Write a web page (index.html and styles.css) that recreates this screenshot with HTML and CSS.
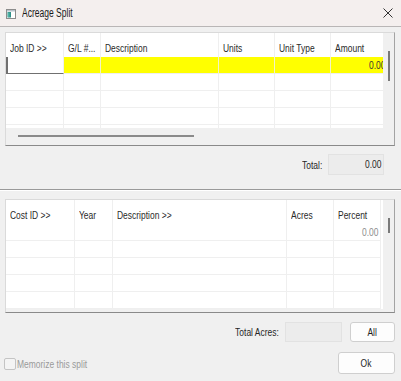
FILE: index.html
```html
<!DOCTYPE html>
<html>
<head>
<meta charset="utf-8">
<link rel="stylesheet" href="styles.css">
</head>
<body>
<div class="window">
  <div class="titlebar">
    <svg class="app-icon" width="10" height="10" viewBox="0 0 10 10">
      <rect x="0.5" y="0.5" width="9" height="9" fill="#fff" stroke="#8c8c8c"/>
      <rect x="1" y="1" width="8" height="1.5" fill="#b8c4cc"/>
      <rect x="1.5" y="3" width="3.5" height="5.5" fill="#2f8f86"/>
      <rect x="2" y="3.5" width="1.5" height="4.5" fill="#4fb3a6"/>
    </svg>
    <span class="title t">Acreage Split</span>
    <svg class="close" width="10" height="10" viewBox="0 0 10 10">
      <path d="M0.5 0.5 L9.5 9.5 M9.5 0.5 L0.5 9.5" stroke="#333" stroke-width="1"/>
    </svg>
  </div>

  <div class="content">
    <div class="panel upper">
      <div class="panel-main">
        <div class="grid-area">
          <div class="grid grid-jobs">
            <div class="cell head"><span class="t">Job ID &gt;&gt;</span></div>
            <div class="cell head"><span class="t">G/L #...</span></div>
            <div class="cell head"><span class="t">Description</span></div>
            <div class="cell head"><span class="t">Units</span></div>
            <div class="cell head"><span class="t">Unit Type</span></div>
            <div class="cell head"><span class="t">Amount</span></div>

            <div class="cell yellow editing"></div>
            <div class="cell yellow"></div>
            <div class="cell yellow"></div>
            <div class="cell yellow"></div>
            <div class="cell yellow"></div>
            <div class="cell yellow num amount"><span class="tr">0.00</span></div>

            <div class="cell"></div><div class="cell"></div><div class="cell"></div><div class="cell"></div><div class="cell"></div><div class="cell"></div>
            <div class="cell"></div><div class="cell"></div><div class="cell"></div><div class="cell"></div><div class="cell"></div><div class="cell"></div>
            <div class="cell"></div><div class="cell"></div><div class="cell"></div><div class="cell"></div><div class="cell"></div><div class="cell"></div>
            <div class="cell"></div><div class="cell"></div><div class="cell"></div><div class="cell"></div><div class="cell"></div><div class="cell"></div>
          </div>
        </div>
        <div class="vscroll"><div class="vthumb upper-thumb"></div></div>
      </div>
      <div class="hscroll"><div class="hthumb"></div></div>
    </div>

    <div class="total-row">
      <span class="label tr">Total:</span>
      <div class="field total-field"><span class="tr">0.00</span></div>
    </div>

    <div class="separator"></div>

    <div class="panel lower">
      <div class="panel-main lower-main">
        <div class="grid-area lower-area">
          <div class="grid grid-costs">
            <div class="cell head"><span class="t">Cost ID &gt;&gt;</span></div>
            <div class="cell head"><span class="t">Year</span></div>
            <div class="cell head"><span class="t">Description &gt;&gt;</span></div>
            <div class="cell head"><span class="t">Acres</span></div>
            <div class="cell head"><span class="t">Percent</span></div>

            <div class="cell"></div><div class="cell"></div><div class="cell"></div><div class="cell"></div><div class="cell num muted"><span class="tr">0.00</span></div>
            <div class="cell"></div><div class="cell"></div><div class="cell"></div><div class="cell"></div><div class="cell"></div>
            <div class="cell"></div><div class="cell"></div><div class="cell"></div><div class="cell"></div><div class="cell"></div>
            <div class="cell"></div><div class="cell"></div><div class="cell"></div><div class="cell"></div><div class="cell"></div>
            <div class="cell"></div><div class="cell"></div><div class="cell"></div><div class="cell"></div><div class="cell"></div>
          </div>
        </div>
        <div class="vscroll"><div class="vthumb lower-thumb"></div></div>
      </div>
    </div>

    <div class="acres-row">
      <span class="label tr">Total Acres:</span>
      <div class="field acres-field"></div>
      <button class="btn all-btn"><span class="tc">All</span></button>
    </div>

    <div class="ok-row">
      <label class="memorize"><span class="checkbox"></span><span class="memo-text t">Memorize this split</span></label>
      <button class="btn ok-btn"><span class="tc">Ok</span></button>
    </div>
  </div>
</div>
</body>
</html>
```

FILE: styles.css
```css
* { box-sizing: border-box; }
html, body { margin: 0; padding: 0; }
body {
  width: 401px;
  height: 381px;
  overflow: hidden;
  background: #f0f0f0;
  font-family: "Liberation Sans", Arial, sans-serif;
  font-size: 11px;
  color: #262626;
}
.window { width: 401px; height: 381px; display: flex; flex-direction: column; }

/* condensed text rendering, matching the squeezed dialog font */
.t, .tr, .tc { display: inline-block; white-space: nowrap; transform: scaleX(0.77); }
.t { transform-origin: left center; }
.tr { transform-origin: right center; }
.tc { transform-origin: center center; }

.titlebar {
  height: 27px;
  flex: none;
  background: #f4efee;
  border-bottom: 1px solid #b9b6b6;
  display: flex;
  align-items: center;
  padding: 0 8px 0 6px;
}
.app-icon { flex: none; margin-top: 1px; }
.title { margin-left: 6px; font-size: 12px; color: #1a1a1a; transform: scaleX(0.71); }
.close { margin-left: auto; }

.content { display: flex; flex-direction: column; padding: 0 6px 0 5px; }

.panel {
  width: 390px;
  border: 1px solid #dadada;
  border-right-color: #a3a3a3;
  border-bottom-color: #8a8a8a;
  background: #f0f0f0;
}
.upper { margin-top: 5px; height: 114px; display: flex; flex-direction: column; }
.panel-main { display: flex; }
.grid-area { width: 377px; height: 95px; overflow: hidden; background: #fff; }
.vscroll { width: 11px; position: relative; }
.vthumb { position: absolute; left: 5px; width: 2px; background: #7a7a7a; }
.upper-thumb { top: 18px; height: 30px; }
.lower-thumb { top: 18px; height: 15px; }

.grid { display: grid; }
.grid-jobs { grid-template-columns: 58px 37px 118px 56px 56px 62px; grid-template-rows: 24px repeat(5, 17px); }
.grid-costs { grid-template-columns: 69px 38px 174px 47px 47px; grid-template-rows: 24px repeat(5, 17px); }

.cell {
  border-right: 1px solid #efefef;
  border-bottom: 1px solid #efefef;
  padding: 0 3px;
  white-space: nowrap;
  overflow: hidden;
  line-height: 16px;
}
.cell.head { border-bottom: none; padding: 8px 3px 0 4px; line-height: 14px; color: #2a2a2a; }
.cell.yellow { background: #ffff00; border-right-color: #f2f2c8; }
.cell.editing {
  background: #fff;
  border-left: 2px solid #707070;
  border-bottom: 1px solid #707070;
  border-right: 1px solid #efefef;
}
.num { text-align: right; }
.cell.amount { padding-right: 7px; color: #333; }
.muted { color: #8d8d8d; padding-right: 2px; }

.hscroll { height: 17px; position: relative; }
.hthumb { position: absolute; left: 12px; top: 7px; width: 176px; height: 2px; background: #8a8a8a; }

.total-row { display: flex; align-items: center; justify-content: flex-end; margin-top: 8px; padding-right: 11px; }
.label { color: #262626; }
.field { background: #ececec; border: 1px solid #e2e2e2; height: 21px; }
.total-field { width: 56px; margin-left: 6px; text-align: right; line-height: 19px; padding-right: 2px; }

.separator { margin: 14px -6px 0 -5px; height: 2px; border-top: 1px solid #9a9a9a; border-bottom: 1px solid #ffffff; }

.lower { margin-top: 8px; height: 114px; }
.lower-main { height: 112px; }
.lower-area { height: 109px; }

.acres-row { display: flex; align-items: center; justify-content: flex-end; margin-top: 9px; height: 20px; }
.acres-field { width: 57px; height: 20px; margin-left: 6px; }
.btn {
  font-family: inherit;
  font-size: 11px;
  color: #1e1e1e;
  background: #fdfdfd;
  border: 1px solid #cfcfcf;
  border-radius: 3px;
  padding: 0;
}
.all-btn { width: 45px; height: 20px; margin-left: 8px; }
.ok-row { display: flex; align-items: center; margin-top: 10px; }
.memorize { display: flex; align-items: center; margin-left: -1px; margin-top: 2px; }
.checkbox { flex: none; width: 12px; height: 12px; border: 1px solid #c4c4c4; border-radius: 2px; background: #f4f4f4; }
.memo-text { color: #9a9a9a; margin-left: 1px; }
.ok-btn { width: 57px; height: 22px; margin-left: auto; }
```
